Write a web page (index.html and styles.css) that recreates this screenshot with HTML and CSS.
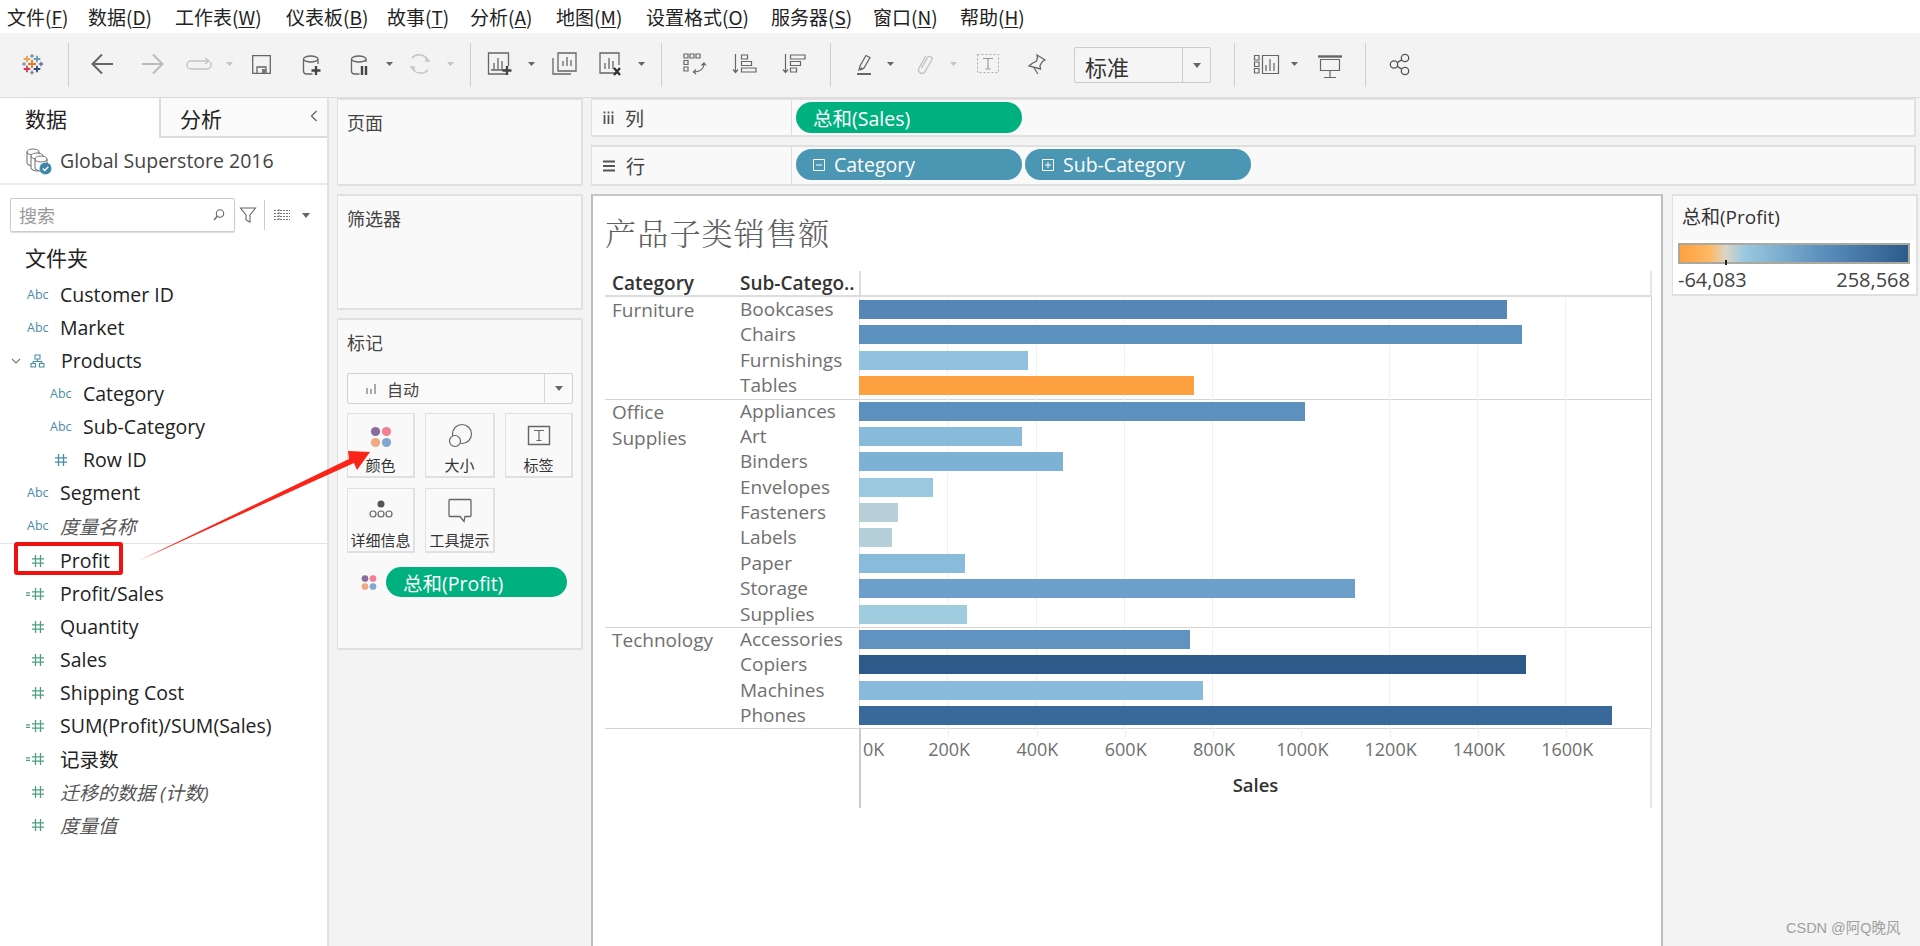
FILE: index.html
```html
<!DOCTYPE html>
<html lang="zh">
<head>
<meta charset="utf-8">
<title>Tableau</title>
<link rel="stylesheet" href="styles.css">
</head>
<body>
<svg class="defs" width="0" height="0">
  <symbol id="hash" viewBox="0 0 14 14"><path d="M4.500 1v12M9.500 1v12M1 4.800h12M1 9.200h12" fill="none" stroke="currentColor" stroke-width="1.300"/></symbol>
  <symbol id="calc" viewBox="0 0 20 14"><path d="M10.500 1v12M15.500 1v12M7 4.800h12M7 9.200h12M1 5.800h4M1 8.400h4" fill="none" stroke="currentColor" stroke-width="1.300"/></symbol>
  <symbol id="dots" viewBox="0 0 20 20"><circle cx="5" cy="5" r="4.200" fill="#8a6d9c"/><circle cx="15" cy="5" r="4.200" fill="#f27f93"/><circle cx="5" cy="15" r="4.200" fill="#f2a880"/><circle cx="15" cy="15" r="4.200" fill="#7fa8d0"/></symbol>
</svg>
<div class="app">
  <nav class="menu">
    <span class="m1">文件(<u>F</u>)</span><span class="m2">数据(<u>D</u>)</span><span class="m3">工作表(<u>W</u>)</span><span class="m4">仪表板(<u>B</u>)</span><span class="m5">故事(<u>T</u>)</span><span class="m6">分析(<u>A</u>)</span><span class="m7">地图(<u>M</u>)</span><span class="m8">设置格式(<u>O</u>)</span><span class="m9">服务器(<u>S</u>)</span><span class="m10">窗口(<u>N</u>)</span><span class="m11">帮助(<u>H</u>)</span>
  </nav>
  <div class="toolbar">
    <svg class="tg" width="68" height="64" viewBox="0 33 68 64">
      <g fill="none" stroke-width="1.800">
        <path d="M32 60v8M28 64h8" stroke="#e8762c"/>
        <path d="M27 55.700v6.600M23.700 59h6.600" stroke="#f0a050"/>
        <path d="M37 55.700v6.600M33.700 59h6.600" stroke="#6f9aad"/>
        <path d="M27 65.700v6.600M23.700 69h6.600" stroke="#d8384c"/>
        <path d="M37 65.700v6.600M33.700 69h6.600" stroke="#2a4a78"/>
        <path d="M24 62v4M22 64h4" stroke="#7a9fb0" stroke-width="1.400"/>
        <path d="M41 61.800v4.400M38.800 64h4.400" stroke="#6a6aa0" stroke-width="1.400"/>
        <path d="M32 54v4M30 56h4" stroke="#6f9aad" stroke-width="1.400"/>
        <path d="M32 70.500v4M30 72.500h4" stroke="#7a8fb0" stroke-width="1.400"/>
      </g>
    </svg>
    <i class="sep"></i>
    <svg class="tg" width="401" height="64" viewBox="69 33 401 64">
      <g fill="none" stroke="#666" stroke-width="2">
        <path d="M113 64H93M102 54.500L92.500 64l9.500 9.500"/>
      </g>
      <g fill="none" stroke="#bbb" stroke-width="2">
        <path d="M142 64h20M153 54.500l9.500 9.500-9.500 9.500"/>
      </g>
      <g fill="none" stroke="#c4c4c4" stroke-width="1.500">
        <path d="M208 61h-17a4 4 0 0 0 0 8h16a4 4 0 0 0 4-4v-3M205 58l4 3-4 3"/>
        <path d="M412 58a10 10 0 0 1 16 2M428 70a10 10 0 0 1-16-2M426 57v4h4M414 71v-4h-4"/>
      </g>
      <path d="M226 62h7l-3.500 4z" fill="#c4c4c4"/>
      <g fill="none" stroke="#666" stroke-width="1.300">
        <path d="M252.700 55.700h17.600v17.600h-17.600zM257 73v-6h9v6"/>
        <path d="M303.500 59v12a3 3 0 0 0 3 3h6M318 59v5M303.500 59a7.250 3 0 0 1 14.500 0a7.250 3 0 0 1-14.500 0"/>
        <path d="M351.500 59v12a3 3 0 0 0 3 3h5M366 59v3M351.500 59a7.250 3 0 0 1 14.500 0a7.250 3 0 0 1-14.500 0"/>
      </g>
      <path d="M262 69h4v4h-4z" fill="#777"/>
      <path d="M316 66v9M311.500 70.500h9" stroke="#444" stroke-width="2.400" fill="none"/>
      <path d="M362 66v9M366 66v9" stroke="#444" stroke-width="2.400" fill="none"/>
      <path d="M386 62h7l-3.500 4z" fill="#666"/>
      <path d="M447 62h7l-3.500 4z" fill="#c4c4c4"/>
    </svg>
    <i class="sep"></i>
    <svg class="tg" width="190" height="64" viewBox="471 33 190 64">
      <g fill="none" stroke="#666" stroke-width="1.300">
        <path d="M507 74h-18.500V53h20v13M494 70v-7M498 70V58M502 70v-9M491 70h15"/>
        <path d="M558 53h18v18h-18zM563 66v-5M567 66v-9M571 66v-6M553 58v16h18"/>
        <path d="M617 73h-17V53h19v12M605 69v-6M609 69V58M613 69v-8"/>
      </g>
      <path d="M507 66v9M502.500 70.500h9" stroke="#444" stroke-width="2.400" fill="none"/>
      <path d="M614 68l6 7M620 68l-6 7" stroke="#333" stroke-width="2.400" fill="none"/>
      <path d="M528 62h7l-3.500 4z M638 62h7l-3.500 4z" fill="#666"/>
    </svg>
    <i class="sep"></i>
    <svg class="tg" width="168" height="64" viewBox="662 33 168 64">
      <g fill="none" stroke="#666" stroke-width="1.200">
        <path d="M684 54h4v4h-4zM690 54h4v4h-4zM696 54h4v4h-4zM684 60.500h4v4h-4zM684 67h4v4h-4z"/>
        <path d="M704 63.500c0 4.500-3.500 8-9.500 8.500M701.500 65.500l2.500-2.500 2 2.500M696 69.500l-2.500 2.500 2.500 2"/>
        <path d="M735.500 54v18M733 69.500l2.500 3 2.500-3M741.500 55h6v4h-6zM741.500 61.500h10v4h-10zM741.500 68h14.500v4h-14.500z"/>
        <path d="M785.500 54v18M783 69.500l2.500 3 2.500-3M790.500 55h14.500v4h-14.500zM790.500 61.500h10v4h-10zM790.500 68h6v4h-6z"/>
      </g>
    </svg>
    <i class="sep"></i>
    <svg class="tg" width="243" height="64" viewBox="831 33 243 64">
      <g fill="none" stroke="#666" stroke-width="1.300">
        <path d="M859 70l1-4 6-10.500 4 2-6 10.500z"/>
        <path d="M1037 55l8 5-2.500 1.500-2.500 4 .5 3.500-11.500-3 3-2.500 4.500-2.500 1-3.500zM1034 68l4 6"/>
      </g>
      <path d="M860 70.500l4-1.500-3-2z" fill="#666"/>
      <path d="M857 74h14" stroke="#666" stroke-width="2"/>
      <path d="M887 62h7l-3.500 4z" fill="#666"/>
      <path d="M950 62h7l-3.500 4z" fill="#c4c4c4"/>
      <path d="M921.500 68l6-10.500a2.500 2.500 0 0 1 4.300 2.500l-7 12a3.500 3.500 0 0 1-6-3.500l7-12.500" fill="none" stroke="#c0c0c0" stroke-width="1.300"/>
      <path d="M977.500 54.500h21v18h-21z" fill="none" stroke="#aaa" stroke-dasharray="2 2"/>
      <path d="M983 58.500h10M988 58.500v10.500M985.500 69h5" fill="none" stroke="#999" stroke-width="1.200"/>
    </svg>
    <div class="select">
      <span class="select-text">标准</span>
      <span class="select-btn"><b class="caret"></b></span>
    </div>
    <i class="sep sep-f"></i>
    <svg class="tg" width="130" height="64" viewBox="1235 33 130 64">
      <g fill="none" stroke="#666" stroke-width="1.200">
        <path d="M1254.500 55.500h4.500v4.500h-4.500zM1254.500 62h4.500v4.500h-4.500zM1254.500 68.500h4.500v4.500h-4.500zM1262.500 55.500h16v18h-16zM1266 71v-6M1270 71V59M1274 71v-8"/>
        <path d="M1320.500 59.500h19v11h-19zM1330 71v7M1324 77.500h12"/>
      </g>
      <path d="M1318 56.500h24" stroke="#666" stroke-width="2.400"/>
      <path d="M1291 62h7l-3.500 4z" fill="#666"/>
    </svg>
    <i class="sep"></i>
    <svg class="tg" width="60" height="64" viewBox="1366 33 60 64">
      <g fill="none" stroke="#555" stroke-width="1.300">
        <circle cx="1394" cy="64.500" r="3.700"/><circle cx="1405" cy="58" r="3.700"/><circle cx="1405" cy="71" r="3.700"/>
        <path d="M1397.200 62.600l4.600-2.700M1397.200 66.400l4.600 2.700"/>
      </g>
    </svg>
  </div>

  <div class="work">
    <aside class="data">
      <div class="tabs">
        <div class="tab tab-on">数据</div>
        <div class="tab tab-off">分析<svg class="chev" width="10" height="14" viewBox="0 0 10 14"><path d="M7.500 2L2.500 7l5 5" fill="none" stroke="#666" stroke-width="1.300"/></svg></div>
      </div>
      <div class="source">
        <svg width="26" height="28" viewBox="0 0 26 28">
          <g fill="#fff" stroke="#777" stroke-width="1.100">
            <path d="M1 5v11c0 1.500 3 3 6 3s6-1.500 6-3V5"/><ellipse cx="7" cy="5" rx="6" ry="3"/>
            <path d="M5 9v12c0 1.500 3 3 6 3s6-1.500 6-3V9"/><ellipse cx="11" cy="9" rx="6" ry="3"/>
            <path d="M9 12v9c0 1.500 3 3 6 3s6-1.500 6-3v-9"/><ellipse cx="15" cy="12" rx="6" ry="3"/>
          </g>
          <circle cx="19.500" cy="21.500" r="6" fill="#3c86ac"/>
          <path d="M16.800 21.500l2 2 3.500-3.800" fill="none" stroke="#fff" stroke-width="1.300"/>
        </svg>
        <span>Global Superstore 2016</span>
      </div>
      <div class="searchrow">
        <div class="search"><span>搜索</span><svg width="14" height="14" viewBox="0 0 14 14"><circle cx="8" cy="5.500" r="3.700" fill="none" stroke="#666" stroke-width="1.100"/><path d="M5.300 8.200L2 12" stroke="#666" stroke-width="1.300"/></svg></div>
        <svg class="funnel" width="18" height="18" viewBox="0 0 18 18"><path d="M1.500 2h15l-5.500 7v7l-4-2V9z" fill="none" stroke="#666" stroke-width="1.100"/></svg>
        <i class="vsep"></i>
        <svg class="listic" width="16" height="14" viewBox="0 0 16 14"><path d="M0 2.500h16M0 5.500h16M0 8.500h16M0 11.500h16M5 1v12" fill="none" stroke="#777" stroke-dasharray="2 1"/></svg>
        <b class="caret caret-list"></b>
      </div>
      <div class="folder">文件夹</div>
      <ul class="fields">
        <li class="f"><span class="abc">Abc</span>Customer ID</li>
        <li class="f"><span class="abc">Abc</span>Market</li>
        <li class="f f-h"><svg class="tw" width="10" height="8" viewBox="0 0 10 8"><path d="M1 2l4 4 4-4" fill="none" stroke="#777" stroke-width="1.100"/></svg><svg class="org" width="15" height="14" viewBox="0 0 15 14"><path d="M5 1h5v4H5zM1 9.500h4.500v3.500H1zM9.500 9.500H14v3.500H9.500zM7.500 5v2.500M3.200 9.500v-2h8.600v2" fill="none" stroke="#4a8ca6" stroke-width="1.100"/></svg>Products</li>
        <li class="f f-n"><span class="abc">Abc</span>Category</li>
        <li class="f f-n"><span class="abc">Abc</span>Sub-Category</li>
        <li class="f f-n"><svg class="hash blue"><use href="#hash"/></svg>Row ID</li>
        <li class="f"><span class="abc">Abc</span>Segment</li>
        <li class="f f-i"><span class="abc">Abc</span><em>度量名称</em></li>
      </ul>
      <ul class="fields fields-m">
        <li class="f"><svg class="hash"><use href="#hash"/></svg>Profit</li>
        <li class="f"><svg class="calc"><use href="#calc"/></svg>Profit/Sales</li>
        <li class="f"><svg class="hash"><use href="#hash"/></svg>Quantity</li>
        <li class="f"><svg class="hash"><use href="#hash"/></svg>Sales</li>
        <li class="f"><svg class="hash"><use href="#hash"/></svg>Shipping Cost</li>
        <li class="f"><svg class="calc"><use href="#calc"/></svg>SUM(Profit)/SUM(Sales)</li>
        <li class="f"><svg class="calc"><use href="#calc"/></svg>记录数</li>
        <li class="f f-i"><svg class="hash"><use href="#hash"/></svg><em>迁移的数据 (计数)</em></li>
        <li class="f f-i"><svg class="hash"><use href="#hash"/></svg><em>度量值</em></li>
      </ul>
    </aside>

    <section class="mid">
      <div class="card c-pages"><h3>页面</h3></div>
      <div class="card c-filters"><h3>筛选器</h3></div>
      <div class="card c-marks">
        <h3>标记</h3>
        <div class="marksel">
          <svg width="12" height="12" viewBox="0 0 12 12"><path d="M1 5h2v6H1zM5 6h2v5H5zM9 1h2v10H9z" fill="#aaa"/></svg>
          <span class="marksel-t">自动</span>
          <span class="marksel-b"><b class="caret"></b></span>
        </div>
        <div class="mbtns">
          <div class="mb"><svg class="mi" width="32" height="32" viewBox="0 0 32 32"><use href="#dots" x="5" y="6" width="22" height="22"/></svg><span>颜色</span></div>
          <div class="mb"><svg class="mi" width="32" height="32" viewBox="0 0 32 32"><circle cx="18" cy="14" r="9.500" fill="none" stroke="#666" stroke-width="1.200"/><circle cx="11" cy="21" r="5.500" fill="#fafafa" stroke="#666" stroke-width="1.200"/></svg><span>大小</span></div>
          <div class="mb"><svg class="mi" width="32" height="32" viewBox="0 0 32 32"><path d="M5.500 6.500h21v18h-21z" fill="none" stroke="#666" stroke-width="1.400"/><path d="M11 10.500h10M16 10.500v10M13.500 20.500h5" fill="none" stroke="#666" stroke-width="1.200"/></svg><span>标签</span></div>
          <div class="mb"><svg class="mi" width="32" height="32" viewBox="0 0 32 32"><circle cx="16" cy="9" r="3.500" fill="#555"/><g fill="none" stroke="#666" stroke-width="1.200"><circle cx="8" cy="19" r="3"/><circle cx="16" cy="19" r="3"/><circle cx="24" cy="19" r="3"/></g></svg><span>详细信息</span></div>
          <div class="mb"><svg class="mi" width="32" height="32" viewBox="0 0 32 32"><path d="M6 4.500h20a1 1 0 0 1 1 1v15a1 1 0 0 1-1 1h-5l-1 5-4-5H6a1 1 0 0 1-1-1v-15a1 1 0 0 1 1-1z" fill="none" stroke="#666" stroke-width="1.300"/></svg><span>工具提示</span></div>
        </div>
        <div class="mpillrow">
          <svg width="16" height="17" viewBox="0 0 20 20"><use href="#dots"/></svg>
          <span class="pill pill-g pill-p">总和(Profit)</span>
        </div>
      </div>
    </section>

    <section class="main">
      <div class="shelf s-col">
        <div class="shelf-l"><svg width="11" height="14" viewBox="0 0 11 14"><path d="M1.500 4v9M5.500 4v9M9.500 4v9M1.500 0.500v2M5.500 0.500v2M9.500 0.500v2" stroke="#555" stroke-width="1.800" fill="none"/></svg>列</div>
        <div class="shelf-p"><span class="pill pill-g">总和(Sales)</span></div>
      </div>
      <div class="shelf s-row">
        <div class="shelf-l"><svg width="12" height="14" viewBox="0 0 12 14"><path d="M0 2.500h12M0 7h12M0 11.500h12" stroke="#555" stroke-width="1.800" fill="none"/></svg>行</div>
        <div class="shelf-p">
          <span class="pill pill-b"><svg width="12" height="12" viewBox="0 0 12 12"><path d="M.5.500h11v11H.5zM3 6h6" fill="none" stroke="#fff"/></svg>Category</span>
          <span class="pill pill-b"><svg width="12" height="12" viewBox="0 0 12 12"><path d="M.5.500h11v11H.5zM3 6h6M6 3v6" fill="none" stroke="#fff"/></svg>Sub-Category</span>
        </div>
      </div>
      <div class="below">
        <div class="canvas">
          <h1 class="title">产品子类销售额</h1>
          <div class="table">
            <div class="thead"><span class="th th-c">Category</span><span class="th th-s">Sub-Catego..</span><span class="th-p"></span></div>
            <div class="group">
              <div class="cat">Furniture</div>
              <div class="rows">
                <div class="r"><span class="sub">Bookcases</span><div class="plot"><div class="bar" style="width:648px;background:#5586b5"></div></div></div>
                <div class="r"><span class="sub">Chairs</span><div class="plot"><div class="bar" style="width:663px;background:#5c90bd"></div></div></div>
                <div class="r"><span class="sub">Furnishings</span><div class="plot"><div class="bar" style="width:169px;background:#90c1df"></div></div></div>
                <div class="r"><span class="sub">Tables</span><div class="plot"><div class="bar" style="width:335px;background:#fea040"></div></div></div>
              </div>
            </div>
            <div class="group">
              <div class="cat">Office<br>Supplies</div>
              <div class="rows">
                <div class="r"><span class="sub">Appliances</span><div class="plot"><div class="bar" style="width:446px;background:#5c90bd"></div></div></div>
                <div class="r"><span class="sub">Art</span><div class="plot"><div class="bar" style="width:163px;background:#87badb"></div></div></div>
                <div class="r"><span class="sub">Binders</span><div class="plot"><div class="bar" style="width:204px;background:#7db1d6"></div></div></div>
                <div class="r"><span class="sub">Envelopes</span><div class="plot"><div class="bar" style="width:74px;background:#9ac8e0"></div></div></div>
                <div class="r"><span class="sub">Fasteners</span><div class="plot"><div class="bar" style="width:39px;background:#b7cfd6"></div></div></div>
                <div class="r"><span class="sub">Labels</span><div class="plot"><div class="bar" style="width:33px;background:#b4cfd8"></div></div></div>
                <div class="r"><span class="sub">Paper</span><div class="plot"><div class="bar" style="width:106px;background:#88bbdc"></div></div></div>
                <div class="r"><span class="sub">Storage</span><div class="plot"><div class="bar" style="width:496px;background:#6ca0ca"></div></div></div>
                <div class="r"><span class="sub">Supplies</span><div class="plot"><div class="bar" style="width:108px;background:#a0cce0"></div></div></div>
              </div>
            </div>
            <div class="group">
              <div class="cat">Technology</div>
              <div class="rows">
                <div class="r"><span class="sub">Accessories</span><div class="plot"><div class="bar" style="width:331px;background:#6093c0"></div></div></div>
                <div class="r"><span class="sub">Copiers</span><div class="plot"><div class="bar" style="width:667px;background:#2c5b8a"></div></div></div>
                <div class="r"><span class="sub">Machines</span><div class="plot"><div class="bar" style="width:344px;background:#87badb"></div></div></div>
                <div class="r"><span class="sub">Phones</span><div class="plot"><div class="bar" style="width:753px;background:#39699b"></div></div></div>
              </div>
            </div>
            <div class="axis">
              <div class="ticks">
                <span class="tick t0">0K</span><span class="tick">200K</span><span class="tick">400K</span><span class="tick">600K</span><span class="tick">800K</span><span class="tick">1000K</span><span class="tick">1200K</span><span class="tick">1400K</span><span class="tick">1600K</span>
              </div>
              <div class="axis-t">Sales</div>
            </div>
          </div>
        </div>
        <div class="legend">
          <div class="legend-h">总和(Profit)</div>
          <div class="legend-b">
            <div class="ramp"><i class="zero"></i></div>
            <div class="legend-v"><span>-64,083</span><span>258,568</span></div>
          </div>
        </div>
      </div>
    </section>
  </div>
</div>
<div class="redbox"></div>
<svg class="arrow" width="1920" height="946" viewBox="0 0 1920 946"><path d="M138 561L349 459L348 451L370 452L357 470L354 463Z" fill="#fb2418"/></svg>
<div class="mark">CSDN @阿Q晚风</div>
</body>
</html>
```
FILE: styles.css
```css
* { box-sizing: border-box; }
html, body { margin: 0; height: 100%; }
body {
  font-family: "Open Sans", "Noto Sans CJK SC", sans-serif;
  background: #f3f3f3;
  color: #222;
  overflow: hidden;
  position: relative;
}
.defs { position: absolute; }
ul { list-style: none; margin: 0; padding: 0; }
h1, h3 { margin: 0; font-weight: 400; }
i, b { display: block; }

.app { display: flex; flex-direction: column; height: 946px; }

/* menu */
.menu {
  height: 33px; background: #fff; display: flex; align-items: center;
  padding-left: 7px; font-family: "Noto Sans CJK SC", sans-serif;
  font-size: 19px; color: #222; white-space: nowrap; flex: none;
}
.menu span { display: block; }
.m1 { width: 81px; } .m2 { width: 87px; } .m3 { width: 111px; } .m4 { width: 101px; }
.m5 { width: 83px; } .m6 { width: 86px; } .m7 { width: 90px; } .m8 { width: 125px; }
.m9 { width: 102px; } .m10 { width: 87px; }
.menu u { text-underline-offset: 2px; }

/* toolbar */
.toolbar {
  height: 65px; display: flex; align-items: flex-start; background: #f3f3f3;
  border-bottom: 1px solid #dcdcdc; flex: none;
}
.tg { display: block; flex: none; }
.sep { width: 1px; height: 44px; margin-top: 10px; background: #cfcfcf; flex: none; }
.sep-f { margin-left: 23px; }
.select {
  width: 137px; height: 36px; margin-top: 14px; border: 1px solid #ccc; border-radius: 2px;
  display: flex; background: #f5f5f5; flex: none;
}
.select-text { flex: 1; padding-left: 10px; font-size: 22px; line-height: 36px; font-family: "Noto Sans CJK SC", sans-serif; color: #333; }
.select-btn { width: 28px; border-left: 1px solid #ccc; display: flex; align-items: center; justify-content: center; }
.caret { width: 0; height: 0; border-left: 4.500px solid transparent; border-right: 4.500px solid transparent; border-top: 5px solid #666; }

/* workspace */
.work { flex: 1; display: flex; min-height: 0; }

.data { width: 329px; background: #fff; border-right: 2px solid #e2e2e2; flex: none; }
.tabs { height: 40px; display: flex; }
.tab { font-size: 21px; font-family: "Noto Sans CJK SC", sans-serif; line-height: 40px; position: relative; }
.tab-on { width: 159px; padding-left: 25px; }
.tab-off { flex: 1; padding-left: 19px; border-left: 2px solid #dcdcdc; border-bottom: 2px solid #dcdcdc; background: #fafafa; }
.chev { position: absolute; right: 8px; top: 11px; }
.source {
  height: 47px; display: flex; align-items: center; gap: 8px; padding-left: 26px;
  border-bottom: 2px solid #eaeaea; font-size: 19.500px; color: #444;
}
.searchrow { display: flex; align-items: center; height: 34px; margin-top: 13px; padding-left: 10px; }
.search {
  width: 225px; height: 34px; border: 1px solid #ccc; border-radius: 2px;
  box-shadow: 0 1px 1px #ddd; display: flex; align-items: center; justify-content: space-between;
  padding: 0 8px; font-size: 18px; color: #999; background: #fff; font-family: "Noto Sans CJK SC", sans-serif;
}
.funnel { margin-left: 4px; }
.vsep { width: 1px; height: 30px; background: #ccc; margin-left: 7px; }
.listic { margin-left: 9px; }
.caret-list { margin-left: 12px; }
.folder { font-size: 21px; font-family: "Noto Sans CJK SC", sans-serif; padding-left: 25px; margin-top: 10px; height: 36px; line-height: 30px; color: #222; }
.fields { border-bottom: 1px solid #e4e4e4; padding-bottom: 1px; }
.fields-m { border: 0; padding-top: 0; }
.f { height: 33px; display: flex; align-items: center; padding-left: 27px; font-size: 19.500px; color: #222; white-space: nowrap; }
.f em { color: #555; font-size: 19px; }
.f-n { padding-left: 50px; }
.f-h { padding-left: 11px; }
.tw { margin-right: 9px; }
.org { margin-right: 16px; }
.abc { width: 33px; font-size: 12.500px; color: #4a8ca6; flex: none; }
.hash { width: 14px; height: 14px; color: #4e9e84; margin: 0 15px 0 4px; flex: none; }
.hash.blue { color: #4a8ca6; }
.calc { width: 20px; height: 14px; color: #4e9e84; margin: 0 15px 0 -2px; flex: none; }

/* mid */
.mid { width: 246px; margin-left: 8px; flex: none; padding-top: 0; display: flex; flex-direction: column; gap: 8px; }
.card { background: #f9f9f9; border: 2px solid #e0e0e0; border-left-width: 1px; padding: 10px 0 0 9px; }
.card h3 { font-size: 18px; line-height: 24px; color: #444; font-family: "Noto Sans CJK SC", sans-serif; }
.c-pages { height: 88px; }
.c-filters { height: 116px; }
.c-marks { height: 332px; }
.marksel {
  width: 226px; height: 31px; margin-top: 19px; border: 1px solid #d0d0d0; border-radius: 2px;
  display: flex; align-items: center; padding-left: 17px; background: #fafafa;
}
.marksel-t { flex: 1; padding-left: 10px; font-size: 16px; color: #444; font-family: "Noto Sans CJK SC", sans-serif; }
.marksel-b { width: 28px; height: 100%; border-left: 1px solid #d8d8d8; display: flex; align-items: center; justify-content: center; }
.mbtns { display: grid; grid-template-columns: 68px 70px 68px; grid-auto-rows: 65px; gap: 10px; margin-top: 9px; }
.mb {
  border: 2px solid #e0e0e0; border-left-width: 1px; border-top-width: 1px; display: flex; flex-direction: column; align-items: center;
  padding-top: 6px; font-size: 15px; color: #333; font-family: "Noto Sans CJK SC", sans-serif; line-height: 20px; white-space: nowrap;
}
.mi { flex: none; margin-bottom: 3px; }
.mpillrow { display: flex; align-items: center; margin-top: 14px; padding-left: 14px; gap: 9px; }

/* pills */
.pill {
  width: 226px; height: 31px; border-radius: 16px; color: #fff; display: flex; align-items: center;
  padding-left: 17px; font-size: 19.500px; flex: none; white-space: nowrap;
}
.pill-g { background: #00b180; }
.pill-b { background: #4b96b3; gap: 9px; width: 226px; }
.pill-p { width: 181px; height: 30px; }

/* main */
.main { flex: 1; margin-left: 8px; display: flex; flex-direction: column; min-width: 0; padding-right: 4px; }
.shelf { background: #f9f9f9; border: 2px solid #e0e0e0; border-left-width: 1px; display: flex; flex: none; }
.s-col { height: 39px; }
.s-row { height: 41px; margin-top: 8px; }
.shelf-l { width: 200px; border-right: 1px solid #ddd; display: flex; align-items: center; gap: 11px; padding-left: 11px; font-size: 19px; color: #444; font-family: "Noto Sans CJK SC", sans-serif; flex: none; }
.shelf-p { display: flex; gap: 3px; padding: 2px 0 0 4px; }
.below { display: flex; gap: 9px; margin-top: 8px; flex: 1; min-height: 0; margin-right: -2px; }
.canvas { width: 1072px; background: #fff; border: 2px solid #bdbdbd; border-bottom: 0; border-top-color: #c6c6c6; flex: none; padding: 0 0 0 12px; }
.title { font-size: 31px; line-height: 38px; margin-top: 17px; letter-spacing: 1.200px; color: #606060; font-weight: 300; font-family: "Noto Serif CJK SC", "Noto Sans CJK SC", serif; }
.table { margin-top: 20px; width: 1047px; font-size: 19px; color: #707070; }
.thead { height: 26px; display: flex; align-items: center; border-bottom: 2px solid #ddd; }
.th { font-weight: 600; color: #333; font-size: 19px; flex: none; }
.th-c { width: 135px; padding-left: 7px; }
.th-s { width: 119px; white-space: nowrap; }
.th-p { flex: 1; align-self: stretch; border-left: 2px solid #ddd; border-right: 2px solid #e6e6e6; }
.group { display: flex; box-shadow: 0 1px 0 #d4d4d4; }
.cat { width: 135px; padding-left: 7px; line-height: 26.500px; flex: none; }
.rows { flex: 1; }
.r { height: 25.375px; display: flex; align-items: stretch; }
.sub { width: 119px; line-height: 25.375px; flex: none; white-space: nowrap; }
.plot {
  flex: 1; padding-top: 3px; border-left: 1px solid #e4e4e4; border-right: 1px solid #d0d0d0;
  background: repeating-linear-gradient(90deg, transparent 0 87.300px, #f1f1f1 87.300px 88.300px);
}
.bar { height: 19px; margin-left: -1px; }
.axis { margin-left: 254px; height: 80px; border-left: 2px solid #ccc; border-right: 2px solid #e6e6e6; position: relative; }
.ticks { display: flex; height: 44px; padding-top: 8px;
  background: repeating-linear-gradient(90deg, transparent 0 87.300px, #eee 87.300px 88.300px) top left / 100% 9px no-repeat; }
.tick { width: 88.300px; text-align: center; flex: none; font-size: 18px; line-height: 26px; color: #707070; }
.tick.t0 { width: 44px; text-align: left; padding-left: 2px; }
.axis-t { text-align: center; font-weight: 600; color: #333; font-size: 18.500px; line-height: 22px; margin-top: 2px; }

/* legend */
.legend { width: 246px; height: 102px; border: 2px solid #e0e0e0; border-left-width: 1px; background: #fff; flex: none; }
.legend-h { height: 44px; background: #f9f9f9; padding-left: 9px; line-height: 43px; font-size: 19px; color: #333; }
.legend-b { padding: 3px 6px 0 5px; }
.ramp {
  height: 21px; border: 2px solid #a9a9a0; position: relative;
  background: linear-gradient(90deg, #fea040 0, #fdb863 13%, #dcd5c5 20%, #9ac8e0 28%, #5c90bd 62%, #2c5b8a 100%);
}
.zero { position: absolute; left: 45px; bottom: -3px; width: 2px; height: 5px; background: #222; }
.legend-v { display: flex; justify-content: space-between; font-size: 20px; line-height: 26px; color: #444; margin-top: 3px; }

/* overlays */
.redbox { position: absolute; left: 14px; top: 542px; width: 109px; height: 33px; border: 4px solid #f01010; border-radius: 3px; }
.arrow { position: absolute; left: 0; top: 0; pointer-events: none; }
.mark { position: absolute; left: 1786px; top: 918px; font-size: 14.500px; line-height: 20px; color: #a0a0a0; font-family: "Liberation Sans", "Noto Sans CJK SC", sans-serif; white-space: nowrap; }
```
